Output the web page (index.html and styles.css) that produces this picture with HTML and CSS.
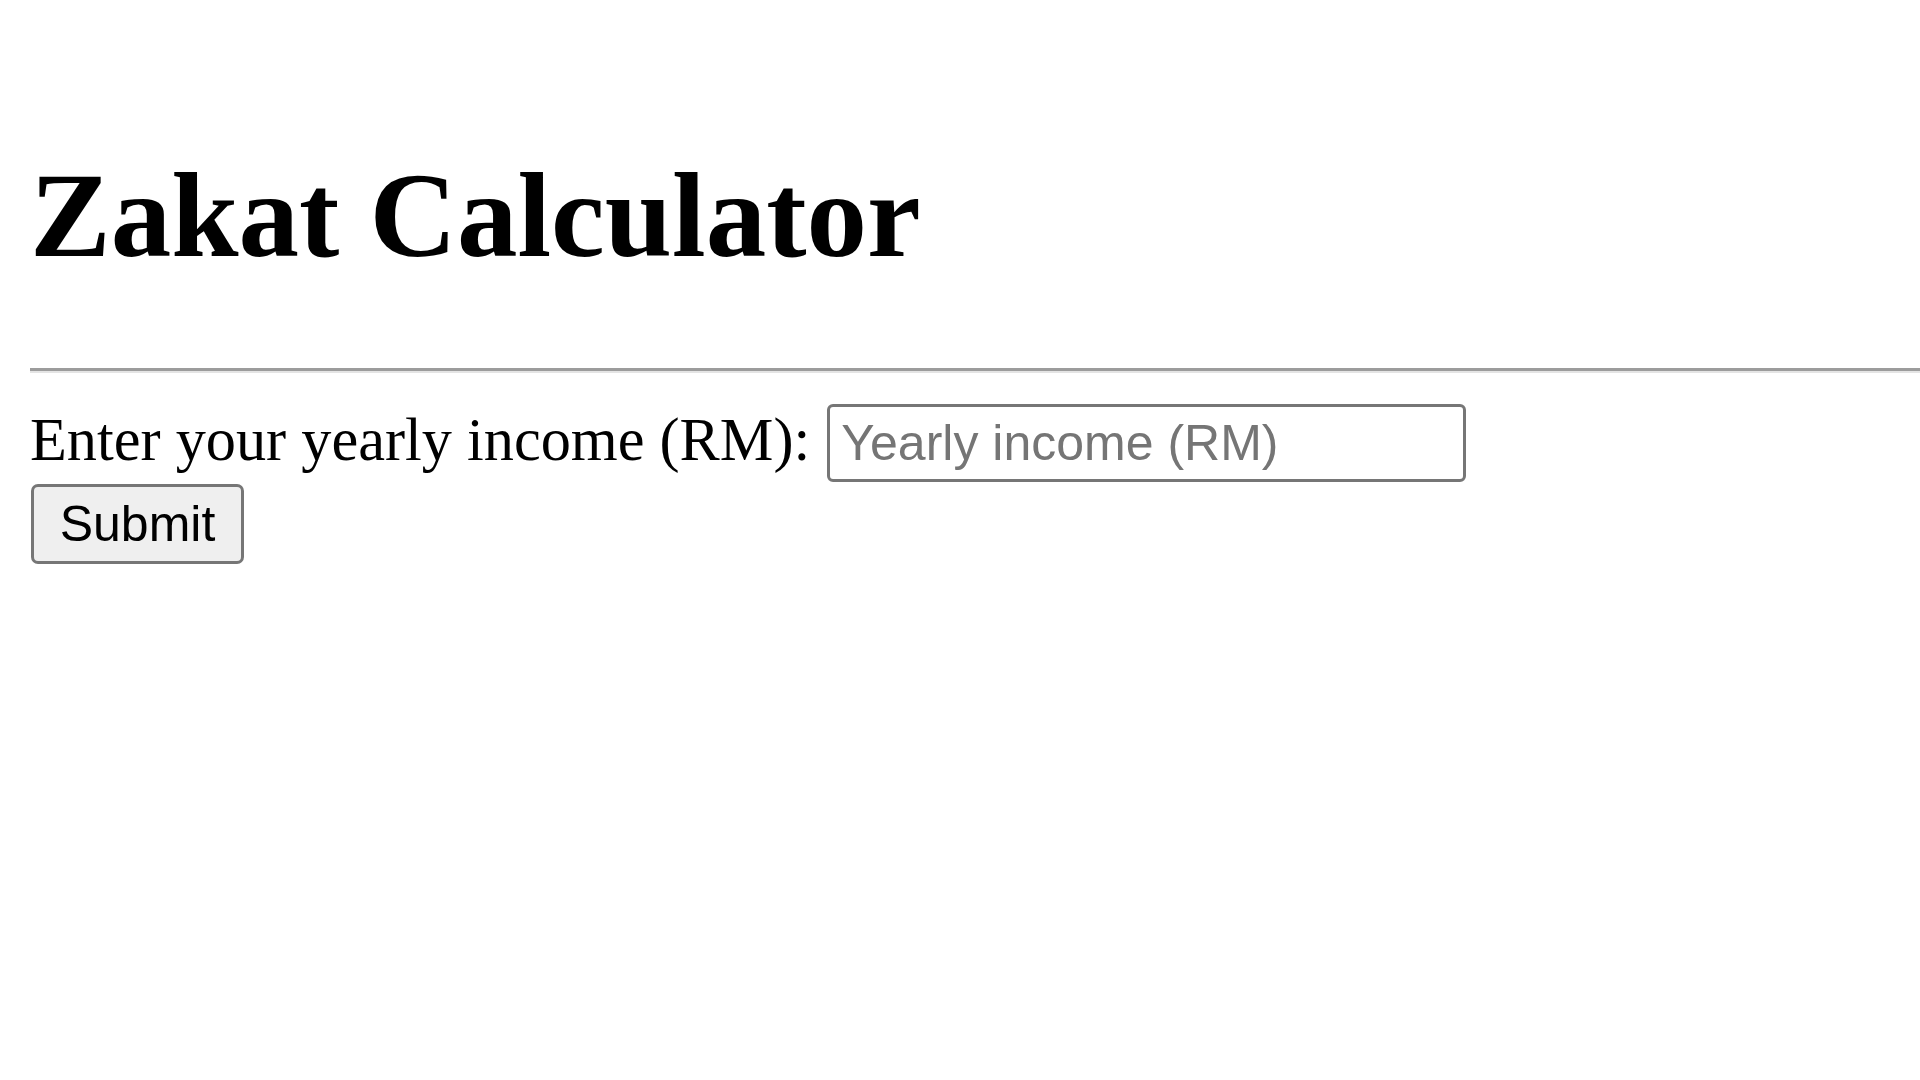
FILE: index.html
```html
<!DOCTYPE html>
<html lang="en">
<head>
<meta charset="utf-8">
<title>Zakat Calculator</title>
<link rel="stylesheet" href="styles.css">
</head>
<body>
  <main class="page">
    <h1 class="title">Zakat Calculator</h1>
    <hr class="divider">
    <form class="zakat-form" onsubmit="return false;">
      <div class="form-row">
        <label class="income-label" for="income">Enter your yearly income (RM):</label>
        <input class="income-input" type="text" id="income" placeholder="Yearly income (RM)">
      </div>
      <button class="submit-btn" type="submit">Submit</button>
    </form>
  </main>
</body>
</html>
```

FILE: styles.css
```css
html, body {
  margin: 0;
  padding: 0;
  background: #ffffff;
}

.page {
  padding: 0 0 0 30px;
  font-family: "Liberation Serif", "Times New Roman", serif;
  color: #000000;
}

.title {
  margin: 146px 0 0 0;
  font-size: 121px;
  line-height: 138px;
  font-weight: bold;
}

.divider {
  margin: 84px 0 31px 0;
  height: 0;
  border: 0;
  border-top: 3px solid #9c9c9c;
  border-bottom: 2px solid #e4e4e4;
}

.zakat-form {
  display: flex;
  flex-direction: column;
  align-items: flex-start;
}

.form-row {
  display: flex;
  align-items: baseline;
  gap: 17px;
}

.income-label {
  font-size: 60.3px;
  line-height: normal;
}

.income-input {
  box-sizing: border-box;
  width: 639px;
  height: 78px;
  margin: 0;
  padding: 0 11px;
  font-family: "Liberation Sans", Arial, sans-serif;
  font-size: 50px;
  color: #000000;
  background: #ffffff;
  border: 3px solid #767676;
  border-radius: 6px;
  outline: none;
}

.income-input::placeholder {
  color: #757575;
  opacity: 1;
}

.submit-btn {
  box-sizing: border-box;
  width: 213px;
  height: 80px;
  margin: 2px 0 0 1px;
  padding: 0;
  font-family: "Liberation Sans", Arial, sans-serif;
  font-size: 50px;
  color: #000000;
  background: #efefef;
  border: 3px solid #767676;
  border-radius: 7px;
}
```
